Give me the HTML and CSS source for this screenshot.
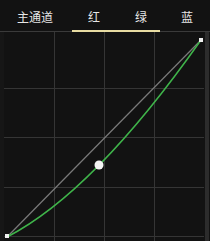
FILE: index.html
```html
<!DOCTYPE html>
<html>
<head>
<meta charset="utf-8">
<link rel="stylesheet" href="styles.css">
</head>
<body>
<div class="panel">
  <div class="tabs">
    <div class="tab t1">主通道</div>
    <div class="tab t2 active">红</div>
    <div class="tab t3">绿</div>
    <div class="tab t4">蓝</div>
    <div class="indicator"></div>
  </div>
  <div class="graph">
    <div class="gutter"></div>
    <svg class="canvas" width="200" height="209" viewBox="4 32 200 209" xmlns="http://www.w3.org/2000/svg">
      <g stroke="#353535" stroke-width="1" fill="none">
        <line x1="54.5" y1="32" x2="54.5" y2="241"/>
        <line x1="104.5" y1="32" x2="104.5" y2="241"/>
        <line x1="154.5" y1="32" x2="154.5" y2="241"/>
        <line x1="4" y1="88.5" x2="204" y2="88.5"/>
        <line x1="4" y1="137.5" x2="204" y2="137.5"/>
        <line x1="4" y1="187.5" x2="204" y2="187.5"/>
        <line x1="4" y1="236.5" x2="204" y2="236.5"/>
      </g>
      <line x1="7" y1="237" x2="201" y2="40" stroke="#7a7a7a" stroke-width="1.2"/>
      <path d="M7 237 Q94 192 201 40" stroke="#3fb44a" stroke-width="1.5" fill="none"/>
      <circle cx="99" cy="165" r="4.5" fill="#f4f4f4"/>
      <rect x="5" y="234" width="4" height="4" fill="#f0f0f0"/>
      <rect x="199" y="38" width="4" height="4" fill="#f0f0f0"/>
    </svg>
    <div class="strip"></div>
  </div>
</div>
</body>
</html>
```
FILE: styles.css
```css
html, body {
  margin: 0;
  padding: 0;
  background: #121212;
}
.panel {
  width: 210px;
  height: 241px;
  background: #121212;
  overflow: hidden;
}
.tabs {
  position: relative;
  display: flex;
  height: 31px;
  border-bottom: 1px solid #3a3a3a;
  box-sizing: content-box;
}
.tab {
  font-family: "Noto Sans CJK SC", "Noto Sans", sans-serif;
  font-size: 12px;
  color: #e6e6e6;
  line-height: 31px;
  padding-top: 1px;
  text-align: center;
  box-sizing: border-box;
}
.t1 { width: 70px; }
.t2 { width: 48px; }
.t3 { width: 46px; }
.t4 { width: 46px; }
.indicator {
  position: absolute;
  left: 72px;
  width: 88px;
  bottom: -1px;
  height: 2px;
  background: #e8dca2;
}
.graph {
  display: flex;
  height: 209px;
}
.gutter {
  width: 4px;
  background: #161616;
  border-right: 0;
}
.canvas {
  display: block;
  flex: none;
}
.strip {
  width: 4px;
  margin-left: 1px;
  background: #2c2c2c;
}
```
